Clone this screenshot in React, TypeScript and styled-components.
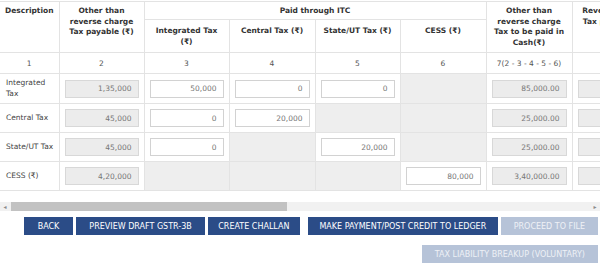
import React from 'react'
import styled, { createGlobalStyle } from 'styled-components'

const GlobalStyle = createGlobalStyle`
  body {
    margin: 0;
    background: #fff;
    font-family: "DejaVu Sans", Verdana, sans-serif;
  }
`

type Kind = 'ro' | 'in' | 'off'
type Cell = { kind: Kind; value?: string }

const ro = (value: string): Cell => ({ kind: 'ro', value })
const inp = (value: string): Cell => ({ kind: 'in', value })
const off: Cell = { kind: 'off' }

const rows: { label: string; cells: Cell[] }[] = [
  {
    label: 'Integrated Tax',
    cells: [ro('1,35,000'), inp('50,000'), inp('0'), inp('0'), off, ro('85,000.00'), ro('0.00'), ro('0.00'), ro('0.00'), ro('0.00'), ro('0.00'), ro('0.00'), ro('0.00'), ro('85,000.00')],
  },
  {
    label: 'Central Tax',
    cells: [ro('45,000'), inp('0'), inp('20,000'), off, off, ro('25,000.00'), ro('0.00'), ro('0.00'), ro('0.00'), ro('0.00'), ro('0.00'), ro('0.00'), ro('0.00'), ro('25,000.00')],
  },
  {
    label: 'State/UT Tax',
    cells: [ro('45,000'), inp('0'), off, inp('20,000'), off, ro('25,000.00'), ro('0.00'), ro('0.00'), ro('0.00'), ro('0.00'), ro('0.00'), ro('0.00'), ro('0.00'), ro('25,000.00')],
  },
  {
    label: 'CESS (₹)',
    cells: [ro('4,20,000'), off, off, off, inp('80,000'), ro('3,40,000.00'), ro('0.00'), ro('0.00'), ro('0.00'), ro('0.00'), ro('0.00'), ro('0.00'), ro('0.00'), ro('3,40,000.00')],
  },
]

const numbers = ['1', '2', '3', '4', '5', '6', '7(2 - 3 - 4 - 5 - 6)', '8', '9', '10', '11', '12', '13', '14', '15']
const widths = [59, 85, 85, 86, 85, 86, 86, 86, 86, 86, 86, 86, 86, 86, 86]
const tableWidth = widths.reduce((a, b) => a + b, 0)

function App() {
  return (
    <Page>
      <GlobalStyle />
      <TableScroll>
        <Table style={{ width: tableWidth }}>
          <colgroup>
            {widths.map((w, i) => (
              <col key={i} style={{ width: w }} />
            ))}
          </colgroup>
          <thead>
            <HeadRow $h={18}>
              <Th rowSpan={2}>Description</Th>
              <Th rowSpan={2}>Other than reverse charge Tax payable (₹)</Th>
              <Th colSpan={4} $pad={4}>Paid through ITC</Th>
              <Th rowSpan={2}>Other than reverse charge Tax to be paid in Cash(₹)</Th>
              <Th rowSpan={2}>
                Reverse charge Tax <Mark>payable</Mark> (₹)
              </Th>
              <Th rowSpan={2}>Reverse charge Tax to be paid in Cash(₹)</Th>
              <Th rowSpan={2}>Interest payable (₹)</Th>
              <Th rowSpan={2}>Interest to be paid in Cash(₹)</Th>
              <Th rowSpan={2}>Late Fee Payable (₹)</Th>
              <Th rowSpan={2}>Late Fee to be paid in Cash(₹)</Th>
              <Th rowSpan={2}>Utilizable Cash balance(₹)</Th>
              <Th rowSpan={2}>Additional Cash required(₹)</Th>
            </HeadRow>
            <HeadRow $h={33}>
              <Th $pad={6}>Integrated Tax (₹)</Th>
              <Th $pad={6}>Central Tax (₹)</Th>
              <Th $pad={6}>State/UT Tax (₹)</Th>
              <Th $pad={6}>CESS (₹)</Th>
            </HeadRow>
          </thead>
          <tbody>
            <tr>
              {numbers.map((n) => (
                <NumCell key={n}>{n}</NumCell>
              ))}
            </tr>
            {rows.map((r) => (
              <tr key={r.label}>
                <LabelCell>{r.label}</LabelCell>
                {r.cells.map((c, i) => (
                  <Td key={i} $off={c.kind === 'off'}>
                    {c.kind !== 'off' && (
                      <Amount readOnly $locked={c.kind === 'ro'} value={c.value} />
                    )}
                  </Td>
                ))}
              </tr>
            ))}
          </tbody>
        </Table>
      </TableScroll>

      <ScrollBar>
        <Arrow>◂</Arrow>
        <Track>
          <Thumb />
        </Track>
        <Arrow>▸</Arrow>
      </ScrollBar>

      <Actions>
        <Button $px={14}>BACK</Button>
        <Button>PREVIEW DRAFT GSTR-3B</Button>
        <Button $px={10.5}>CREATE CHALLAN</Button>
        <Button $px={11.5} $spaced>MAKE PAYMENT/POST CREDIT TO LEDGER</Button>
        <Button $muted>PROCEED TO FILE</Button>
        <Button $muted>TAX LIABILITY BREAKUP (VOLUNTARY)</Button>
      </Actions>
    </Page>
  )
}

export default App

const Page = styled.div`
  width: 600px;
  height: 266px;
  overflow: hidden;
  font-size: 7.5px;
  color: #333;
`

const TableScroll = styled.div`
  overflow: hidden;
  padding-top: 1px;
  padding-bottom: 11px;
`

const Table = styled.table`
  table-layout: fixed;
  border-collapse: collapse;
  border-top: 1px solid #e3e3e3;
`

const HeadRow = styled.tr<{ $h: number }>`
  height: ${(p) => p.$h}px;
`

const Th = styled.th<{ $pad?: number }>`
  border: 1px solid #e3e3e3;
  border-top: none;
  padding: ${(p) => p.$pad ?? 4}px 4px 0;
  vertical-align: top;
  text-align: center;
  font-weight: bold;
  font-size: 7.5px;
  line-height: 10.7px;
  color: #333;
  &:first-child {
    border-left: none;
  }
`

const Mark = styled.span`
  color: #e8a33a;
`

const NumCell = styled.td`
  border: 1px solid #e3e3e3;
  height: 20px;
  padding: 0 2px;
  text-align: center;
  color: #555;
  white-space: nowrap;
  &:first-child {
    border-left: none;
  }
`

const LabelCell = styled.td`
  border: 1px solid #e3e3e3;
  border-left: none;
  padding: 4px 4px 4px 6px;
  height: 20px;
  line-height: 10.7px;
  color: #444;
`

const Td = styled.td<{ $off: boolean }>`
  border: 1px solid #e3e3e3;
  padding: 5px 5px;
  height: 18px;
  background: ${(p) => (p.$off ? '#eeeeee' : '#fff')};
`

const Amount = styled.input<{ $locked: boolean }>`
  display: block;
  box-sizing: border-box;
  width: 100%;
  height: 18px;
  margin: 0;
  padding: 0 6px;
  border: 1px solid ${(p) => (p.$locked ? '#d8d8d8' : '#d2d2d2')};
  background: ${(p) => (p.$locked ? '#ececec' : '#fff')};
  font-family: "DejaVu Sans", Verdana, sans-serif;
  font-size: 7.5px;
  color: #777;
  text-align: right;
  outline: none;
`

const ScrollBar = styled.div`
  display: flex;
  align-items: center;
  height: 9px;
  background: #f1f1f1;
`

const Arrow = styled.span`
  width: 10px;
  text-align: center;
  font-size: 6px;
  color: #8a8a8a;
`

const Track = styled.div`
  flex: 1;
  height: 9px;
  padding-left: 1px;
`

const Thumb = styled.div`
  width: 276px;
  height: 9px;
  background: #c2c2c2;
`

const Actions = styled.div`
  display: flex;
  flex-wrap: wrap;
  justify-content: flex-end;
  column-gap: 3px;
  row-gap: 10px;
  margin-top: 6px;
  padding-right: 2px;
`

const Button = styled.button<{ $muted?: boolean; $spaced?: boolean; $px?: number }>`
  height: 18px;
  padding: 0 ${(p) => p.$px ?? 13}px;
  margin-left: ${(p) => (p.$spaced ? 5 : 0)}px;
  border: none;
  background: ${(p) => (p.$muted ? '#b6c3d8' : '#2b4c87')};
  color: ${(p) => (p.$muted ? '#eef1f6' : '#fff')};
  font-family: "DejaVu Sans", Verdana, sans-serif;
  font-size: 8px;
  white-space: nowrap;
`
